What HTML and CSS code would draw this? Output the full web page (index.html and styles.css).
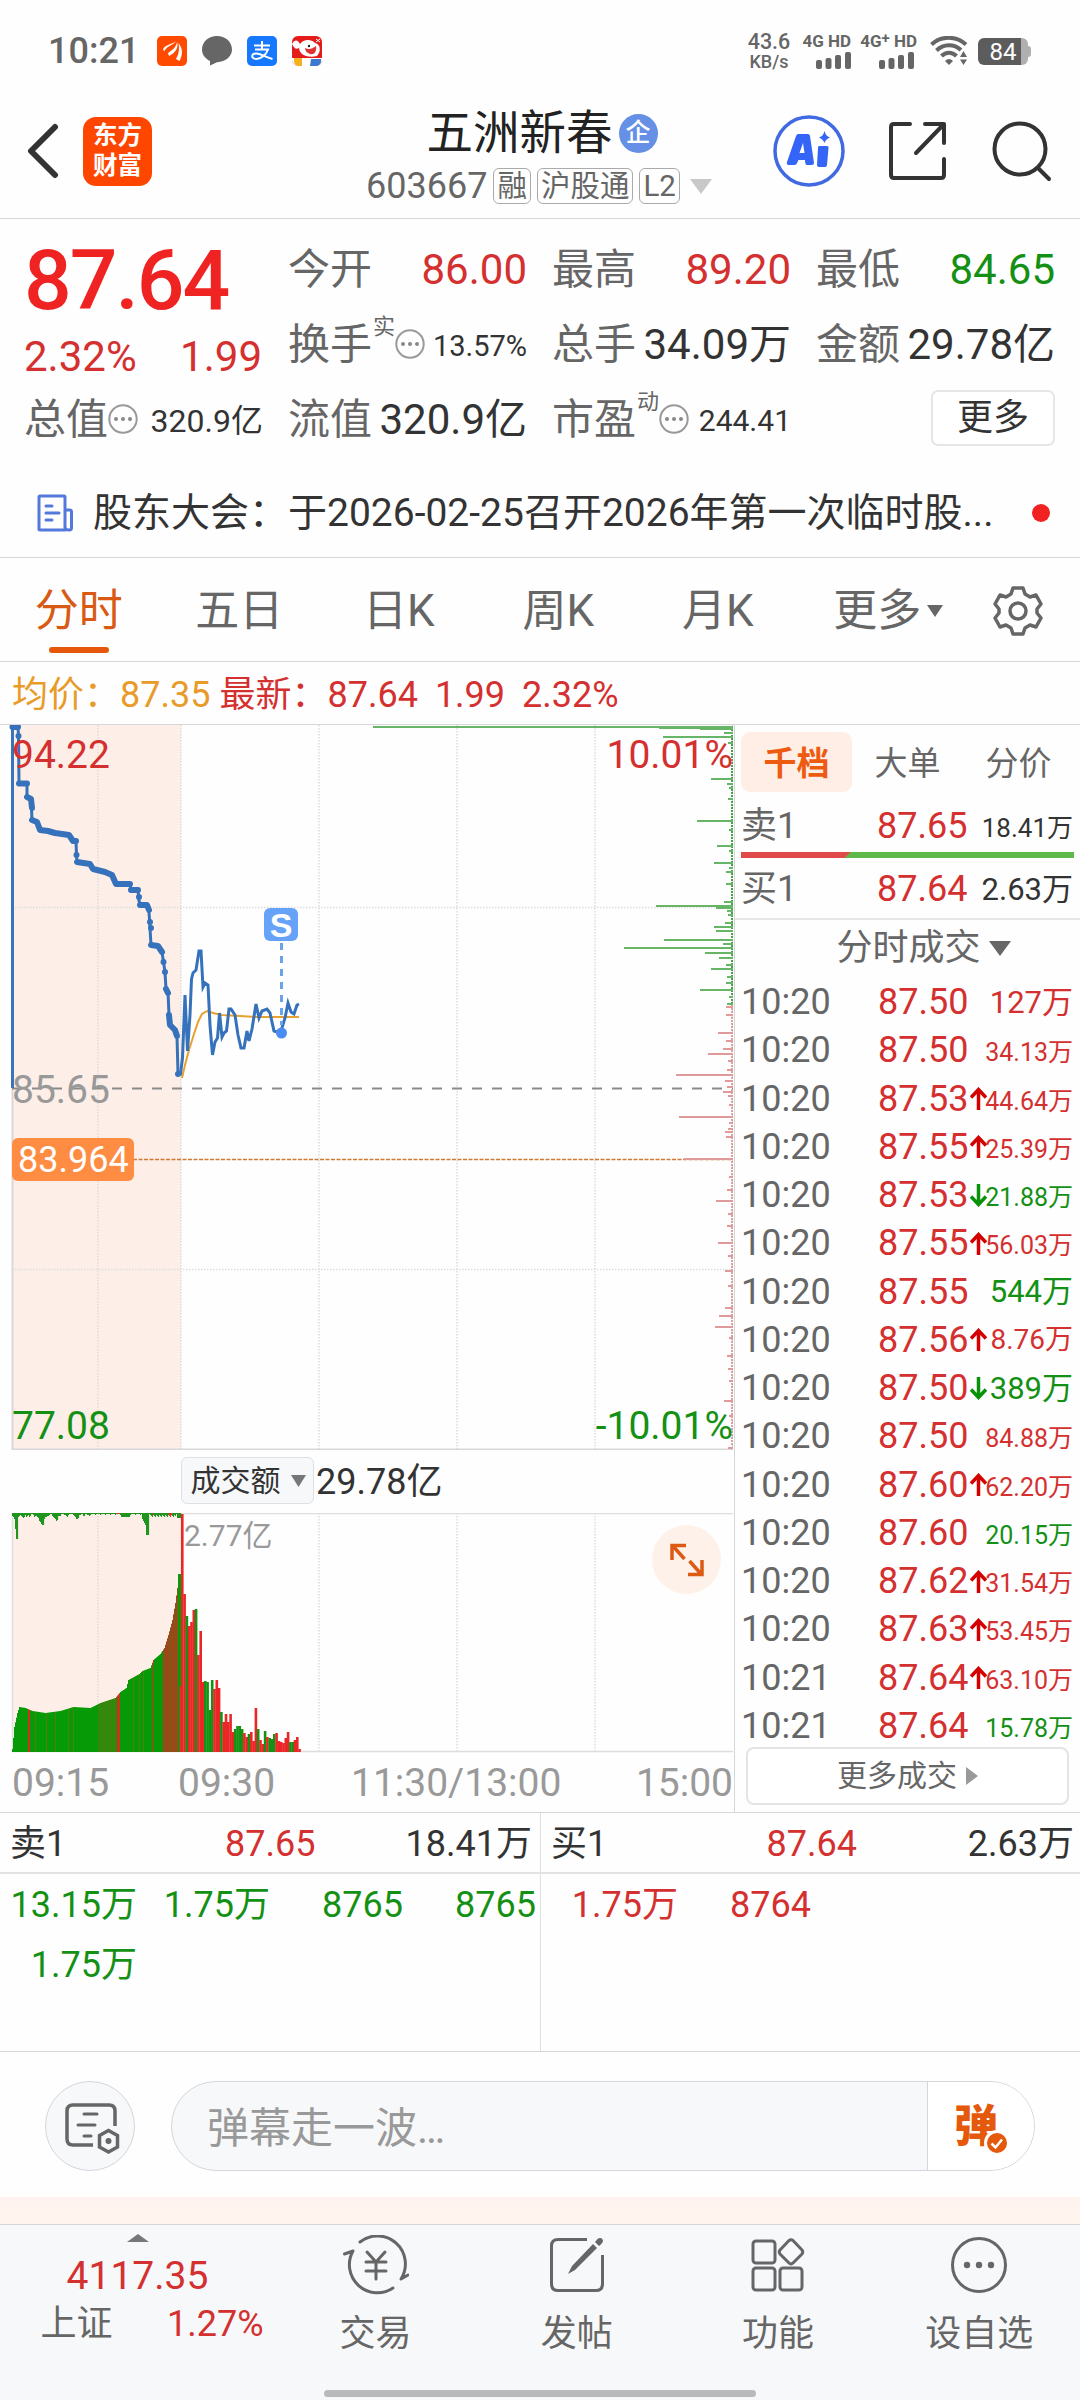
FILE: index.html
```html
<!DOCTYPE html>
<html lang="zh-CN">
<head>
    <meta charset="UTF-8">
    <meta name="viewport" content="width=device-width, initial-scale=1.0">
    <title>五洲新春 603667</title>
    <link rel="stylesheet" href="styles.css">
</head>
<body>

    <div class="status-bar">
        <span class="clock">10:21</span>
        <div class="notif-icons">
            <svg width="30" height="30" viewBox="0 0 30 30">
                <rect width="30" height="30" rx="5" fill="#ff4a00"/>
                <path d="M6 13C9 8.500 14 8.500 19 5.500C16 9 10 10 7 15.500ZM11 17C15 14 19 12 20 6C22 12 18 17 12 20ZM19 23C22 18 22.500 13 21.500 7C26 13 26 18 22.500 25Z" fill="#fff"/>
            </svg>
            <svg width="30" height="30" viewBox="0 0 30 30">
                <path d="M15 0C23.300 0 30 5.800 30 13.500C30 20 24 26 15 26.200L8 29.500V25C3 22.500 0 18.500 0 13.500C0 5.800 6.700 0 15 0Z" fill="#666"/>
            </svg>
            <svg width="30" height="30" viewBox="0 0 30 30">
                <rect width="30" height="30" rx="5" fill="#1677ff"/>
                <path d="M7 9.500H23M15 5V13.500M8 13.500H21C19 19 14 23 9.500 23C3.500 23 4 17 9.500 17.500C15 18 19 21.500 25.500 23" fill="none" stroke="#fff" stroke-width="2"/>
            </svg>
            <svg width="30" height="30" viewBox="0 0 30 30">
                <rect width="30" height="30" rx="6" fill="#e41b1b"/>
                <path d="M0 22H30V24A6 6 0 0 1 24 30H6A6 6 0 0 1 0 24Z" fill="#fff"/>
                <path d="M0 8C3 3 6 4 8 8C11 4 18 2 23 7C29 8 29 16 25 20C17 22 8 20 7 12C4 14 2 12 0 8Z" fill="#fff"/>
                <path d="M13 12C17 14 20 13 24 10C25 16 22 19 18 18C15 17 13 15 13 12Z" fill="#d33"/>
                <path d="M2 22H10V30H6A5 5 0 0 1 2 26Z" fill="#f5b021"/>
                <path d="M19 23H29V25A5 5 0 0 1 25 30H18Z" fill="#3e78cf"/>
                <circle cx="17" cy="10" r="1.200" fill="#222"/>
                <path d="M24 3L28 6M28 3L24 6" stroke="#fff" stroke-width="1"/>
            </svg>
        </div>
        <div class="status-right">
            <div class="net-speed"><b>43.6</b><i>KB/s</i></div>
            <div class="signal">
                <span>4G HD</span>
                <svg width="35" height="17" viewBox="0 0 35 17" fill="#666"><rect y="8" width="6" height="9" rx="2"/><rect x="9.500" y="6" width="6" height="11" rx="2"/><rect x="19" y="3" width="6" height="14" rx="2"/><rect x="29" width="6" height="17" rx="2"/></svg>
            </div>
            <div class="signal signal-plus">
                <span>4G<sup>+</sup> HD</span>
                <svg width="35" height="17" viewBox="0 0 35 17" fill="#666"><rect y="8" width="6" height="9" rx="2"/><rect x="9.500" y="6" width="6" height="11" rx="2"/><rect x="19" y="3" width="6" height="14" rx="2"/><rect x="29" width="6" height="17" rx="2"/></svg>
            </div>
            <svg class="wifi" width="38" height="30" viewBox="0 0 38 30">
                <g fill="none" stroke="#666" stroke-width="4">
                    <path d="M1.500 8.500C11 -0.500 26 -0.500 36 8.500"/>
                    <path d="M6.500 14.500C13.500 7.500 24 7.500 31 14"/>
                    <path d="M11.500 20C16 15.500 22 15.500 26.500 20"/>
                </g>
                <path d="M15 25Q19 21 23 25L19 29ZM30 21L33.500 15L37 21ZM30 23.500L33.500 29L37 23.500Z" fill="#666"/>
            </svg>
            <div class="battery"><span>84</span></div>
        </div>
    </div>

    <header class="page-header">
        <svg class="back" width="32" height="56" viewBox="0 0 32 56"><path d="M28 4L4 28L28 52" fill="none" stroke="#333" stroke-width="6" stroke-linecap="round" stroke-linejoin="round"/></svg>
        <div class="brand"><span>东方</span><span>财富</span></div>
        <div class="title-block">
            <div class="title-row">
                <h1>五洲新春</h1>
                <span class="corp">企</span>
            </div>
            <div class="code-row">
                <span class="code">603667</span>
                <span class="tag">融</span>
                <span class="tag">沪股通</span>
                <span class="tag">L2</span>
                <svg class="caret" width="22" height="15" viewBox="0 0 22 15"><path d="M0 0H22L11 15Z" fill="#c8c8c8"/></svg>
            </div>
        </div>
        <div class="head-actions">
            <svg width="74" height="74" viewBox="0 0 74 74">
                <circle cx="37" cy="37" r="34" fill="#fff" stroke="#4169e1" stroke-width="3.500"/>
                <path fill="#3565f6" fill-rule="evenodd" d="M26 20H36Q37.500 20 38 22L42 49Q42 51 40 51H35Q33 51 33 46H26.500L24.500 50Q24 51 22 51H16Q14 50 15 48L24 22Q25 20 26 20ZM31 29L27.500 39H32.500ZM47 32H55Q57 32 56.500 34L55 51Q55 53 53 53H47Q45 53 45 51L46 34Q46 32 47 32ZM52.500 17Q53.500 22 58 23.500Q53.500 25 52.500 29Q51 25 47 23.500Q51.500 22 52.500 17Z"/>
            </svg>
            <svg class="share" width="60" height="60" viewBox="0 0 60 60" fill="none" stroke="#333" stroke-width="4" stroke-linecap="round" stroke-linejoin="round">
                <path d="M22 3H6Q3 3 3 6V54Q3 57 6 57H53Q56 57 56 54V38M37 3H56V22M56 3L28 32"/>
            </svg>
            <svg class="search" width="60" height="62" viewBox="0 0 60 62" fill="none" stroke="#333" stroke-width="4" stroke-linecap="round">
                <circle cx="28" cy="29" r="25.500"/><path d="M46 48L57 59"/>
            </svg>
        </div>
    </header>

    <section class="quote">
        <div class="cell price-cell">
            <div class="price">87.64</div>
            <div class="change"><span>2.32%</span><span>1.99</span></div>
        </div>
        <div class="cell"><label>今开</label><b class="up">86.00</b></div>
        <div class="cell"><label>最高</label><b class="up">89.20</b></div>
        <div class="cell"><label>最低</label><b class="down">84.65</b></div>
        <div class="cell"><label>换手<sup>实</sup></label><svg class="dots" width="30" height="30" viewBox="0 0 30 30"><use href="#dots"/></svg><b class="small">13.57%</b></div>
        <div class="cell"><label>总手</label><b>34.09万</b></div>
        <div class="cell"><label>金额</label><b>29.78亿</b></div>
        <div class="cell"><label>总值</label><svg class="dots" width="30" height="30" viewBox="0 0 30 30"><use href="#dots"/></svg><b class="small cap">320.9亿</b></div>
        <div class="cell"><label>流值</label><b>320.9亿</b></div>
        <div class="cell"><label>市盈<sup>动</sup></label><svg class="dots" width="30" height="30" viewBox="0 0 30 30"><g id="dots"><circle cx="15" cy="15" r="13.700" fill="none" stroke="#999" stroke-width="2"/><g fill="#888"><circle cx="8" cy="15" r="2"/><circle cx="15" cy="15" r="2"/><circle cx="22" cy="15" r="2"/></g></g></svg><b class="small pe">244.41</b></div>
        <div class="cell"><button class="more-btn">更多</button></div>
    </section>

    <section class="news">
        <svg width="36" height="38" viewBox="0 0 36 38" fill="none" stroke="#5478dc" stroke-width="3" stroke-linecap="round" stroke-linejoin="round">
            <path d="M28 36H3Q2 36 2 35V3Q2 2 3 2H27Q28 2 28 3V34M28 16H33Q34.500 16 34.500 18V34Q34.500 36 32 36Q28 36 28 33M9 12H15M9 19H22M9 26H15"/>
        </svg>
        <p>股东大会：于2026-02-25召开2026年第一次临时股...</p>
        <i class="red-dot"></i>
    </section>

    <nav class="tabs">
        <a class="active">分时</a>
        <a>五日</a>
        <a>日K</a>
        <a>周K</a>
        <a>月K</a>
        <a class="more">更多<svg width="16" height="12" viewBox="0 0 16 12"><path d="M0 0H16L8 12Z" fill="#666"/></svg></a>
        <a class="gear">
            <svg width="52" height="52" viewBox="0 0 52 52" fill="none" stroke="#666" stroke-width="3.500" stroke-linejoin="round">
                <path d="M21 3H31L33 9L38 12L44 10L49 19L45 24V28L49 33L44 42L38 40L33 43L31 49H21L19 43L14 40L8 42L3 33L7 28V24L3 19L8 10L14 12L19 9Z"/>
                <circle cx="26" cy="26" r="8"/>
            </svg>
        </a>
    </nav>

    <div class="legend">
        <span class="avg">均价：87.35</span>
        <span>最新：87.64</span>
        <span class="chg">1.99</span>
        <span class="pct">2.32%</span>
    </div>

    <main>
        <section class="charts">
            <svg class="price-chart" width="734" height="725" viewBox="0 0 734 725">
                <rect x="12" y="0" width="169" height="725" fill="#fdeee7"/>
                <path d="M98 0V725M181 0V725M319 0V725M457 0V725M595 0V725M12 182.500H733M12 544.500H733" stroke="#ddd" stroke-width="1.500" stroke-dasharray="1.500 1.500"/>
                <path d="M12.500 0V724.500H733" fill="none" stroke="#d8d8d8" stroke-width="2"/>
                <path d="M732.500 0V725" stroke="#ccc" stroke-dasharray="2 3"/>
                <path d="M12 363.500H733" stroke="#8a8a8a" stroke-width="2" stroke-dasharray="10 10"/>
                <path d="M12 434.500H733" stroke="#d07830" stroke-width="1.500" stroke-dasharray="4 1.500"/>
                <g id="depth"></g>
                <path d="M182 353L185 340L189 325L194 309L198 297L202 289L207 286L213 288L222 290L240 291L256 292H299" fill="none" stroke="#e8a030" stroke-width="2"/>
                <path d="M12.500 363V2" stroke="#3a74ba" stroke-width="3"/>
                <path d="M12.500 2H18L18.500 11L19 58.500H27V72L31 74L31.500 83L32 95L37 97L40 105L48 106L55 108L69 110L73 116H76L76.500 130L77 137L90 139L93 144L105 147L112 150L115 155L116 159H130L131 165H138L139 176L141 180H147L149 187L150 203L151 220L158 221L162 227L163.500 237L165 247L166 264L168 267L169 290L170 300L175 305L177 311L178 349" fill="none" stroke="#3572bb" stroke-width="3"/>
                <path d="M12.500 2H18M18.500 11V11M19 58.500H27M27 72L31 74L32 83M32 95L37 97L40 105L48 106L55 108L69 110L73 116H76M76.500 130V130M77 137L90 139L93 144L105 147L112 150L116 159H130M131 165H138M139 172V172M140 180H147L149 185M150 197V197M151 203V203M151 220L158 221L162 227M163.500 237V237M165 247V247M166 264L168 268M169 290L170 300L175 305L177 311M178 349V349" fill="none" stroke="#3572bb" stroke-width="6" stroke-linecap="round" stroke-linejoin="round"/>
                <path d="M178 349H180.500L182.500 333L185 270L187.500 326L190 290L191.500 254L193 248L196 245L199 226H201L203 262L205 258L208 260L210 300L212.500 330L215 317L217.500 313L219.500 288L222 312L224 308L226.500 306L229 284H231L235 290L238 310L241 323H244L247 306L249 316L252 304L256 279L259 293L262 286L267 284L270 288L274 306L277 307L281 306L285 293L288 278L291 287L294 289L297 280L299 279" fill="none" stroke="#3572bb" stroke-width="3"/>
                <path d="M281.500 218V300" stroke="#6aa3ea" stroke-width="3" stroke-dasharray="7 6"/>
                <circle cx="281.500" cy="308" r="5.500" fill="#4a8cf2"/>
                <rect x="264" y="183" width="34" height="33" rx="6" fill="#66a2f8"/>
                <text class="sell-mark" x="281" y="211.500" text-anchor="middle">S</text>
                <rect x="12" y="413" width="122" height="43" rx="6" fill="#fe8d43"/>
                <text class="cost" x="18" y="447">83.964</text>
                <text class="scale up" x="12" y="43">94.22</text>
                <text class="scale up" x="733" y="43" text-anchor="end">10.01%</text>
                <text class="scale mid" x="12" y="378">85.65</text>
                <text class="scale down" x="12" y="714">77.08</text>
                <text class="scale down" x="733" y="714" text-anchor="end">-10.01%</text>
            </svg>

            <div class="vol-head">
                <button class="vol-type">成交额<svg width="15" height="12" viewBox="0 0 15 12"><path d="M0 0H15L7.500 12Z" fill="#777"/></svg></button>
                <span>29.78亿</span>
            </div>

            <div class="vol-wrap">
                <svg class="vol-chart" width="734" height="240" viewBox="0 0 734 240">
                    <rect x="12" y="0" width="169" height="238" fill="#fdeee7"/>
                    <path d="M98 0V238M181 0V238M319 0V238M457 0V238M595 0V238" stroke="#ddd" stroke-width="1.500" stroke-dasharray="1.500 1.500"/>
                    <path d="M12 .500H733M12.500 0V238.500H733" fill="none" stroke="#dedede" stroke-width="1.500"/>
                    <g id="volume"></g>
                    <text class="vol-max" x="184" y="33">2.77亿</text>
                </svg>
                <button class="expand">
                    <svg width="36" height="36" viewBox="0 0 36 36" fill="none" stroke="#dd5a14" stroke-width="3.500"><path d="M3 18V3.500H17M3.500 3.500L15.500 17M33 18V32.500H19M32.500 32.500L20.500 19"/></svg>
                </button>
            </div>

            <div class="time-axis">
                <span>09:15</span><span>09:30</span><span>11:30/13:00</span><span>15:00</span>
            </div>
        </section>

        <aside class="panel">
            <div class="panel-tabs"><a class="active">千档</a><a>大单</a><a>分价</a></div>
            <div class="level sell"><span>卖1</span><b>87.65</b><em class="s26">18.41万</em></div>
            <div class="ratio"></div>
            <div class="level buy"><span>买1</span><b>87.64</b><em>2.63万</em></div>
            <div class="deal-title">分时成交<svg width="22" height="15" viewBox="0 0 22 15"><path d="M0 0H22L11 15Z" fill="#666"/></svg></div>
            <div id="ticks" class="ticks"></div>
            <button class="more-deals">更多成交<svg width="12" height="18" viewBox="0 0 12 18"><path d="M0 0L12 9L0 18Z" fill="#999"/></svg></button>
        </aside>
    </main>

    <section class="orders">
        <div class="book">
            <div class="book-head"><span>卖1</span><b>87.65</b><span>18.41万</span></div>
            <div class="book-list down"><span>13.15万</span><span>1.75万</span><span>8765</span><span>8765</span><span>1.75万</span></div>
        </div>
        <div class="book">
            <div class="book-head"><span>买1</span><b>87.64</b><span>2.63万</span></div>
            <div class="book-list up"><span>1.75万</span><span>8764</span></div>
        </div>
    </section>

    <section class="danmu">
        <button class="danmu-set">
            <svg width="56" height="52" viewBox="0 0 56 52" fill="none" stroke="#666" stroke-width="3.500">
                <path d="M29 43H9Q3 43 3 37V9Q3 3 9 3H45Q51 3 51 9V24"/>
                <path d="M20 12H33M14 23H31M20 34H27" stroke-width="3" stroke-linecap="round"/>
                <path d="M44.500 28.500L53.500 33.500V45L44.500 50L35.500 45V33.500Z"/>
                <circle cx="44.500" cy="39" r="3" fill="#666" stroke="none"/>
            </svg>
        </button>
        <div class="danmu-box">
            <span class="placeholder">弹幕走一波…</span>
            <div class="danmu-toggle">
                <span>弹</span>
                <svg width="26" height="26" viewBox="0 0 26 26"><circle cx="13" cy="13" r="11.500" fill="#e5590c" stroke="#fff" stroke-width="3"/><path d="M7.500 13.500L11.500 17.500L18 9.500" fill="none" stroke="#fff" stroke-width="2.500"/></svg>
            </div>
        </div>
    </section>

    <div class="strip"></div>

    <footer>
        <div class="index">
            <svg width="22" height="8" viewBox="0 0 22 8"><path d="M0 8L11 0L22 8Z" fill="#77787c"/></svg>
            <b>4117.35</b>
            <div><span>上证</span><b>1.27%</b></div>
        </div>
        <a>
            <svg width="66" height="60" viewBox="0 0 66 60" fill="none" stroke="#666" stroke-width="3" stroke-linecap="round" stroke-linejoin="round">
                <path d="M17 7A28 28 0 0 1 58 44L65 40M1.500 19L10 16A28 28 0 0 0 50 53"/>
                <path d="M24 17L33 27L42 17M23 27H43M23 36H43M33 27V44"/>
            </svg>
            <span>交易</span>
        </a>
        <a>
            <svg width="58" height="60" viewBox="0 0 58 60">
                <path d="M39 4.500H10Q3.500 4.500 3.500 11V49Q3.500 55.500 10 55.500H48Q54.500 55.500 54.500 49V20" fill="none" stroke="#666" stroke-width="3"/>
                <path d="M20 39L24 31L45 9L49 13L27 35ZM47 7L50 3.500Q54 2 55 5.500Q55 8 51 11Z" fill="#666"/>
            </svg>
            <span>发帖</span>
        </a>
        <a>
            <svg width="56" height="60" viewBox="0 0 56 60" fill="none" stroke="#666" stroke-width="3" stroke-linejoin="round">
                <rect x="3" y="6" width="22" height="22" rx="3"/><rect x="3" y="33" width="22" height="22" rx="3"/><rect x="30" y="33" width="22" height="22" rx="3"/>
                <path d="M39 5.500Q41 4 43 5.500L52 15Q53.500 17 52 19L43 28Q41 30 39 28L30 19Q28.500 17 30 15Z"/>
            </svg>
            <span>功能</span>
        </a>
        <a>
            <svg width="60" height="60" viewBox="0 0 60 60">
                <circle cx="30" cy="30" r="26.500" fill="none" stroke="#666" stroke-width="3"/>
                <g fill="#666"><circle cx="18" cy="30" r="3.200"/><circle cx="30" cy="30" r="3.200"/><circle cx="42" cy="30" r="3.200"/></g>
            </svg>
            <span>设自选</span>
        </a>
        <div class="home-bar"></div>
    </footer>

    <script>
        // time, price, direction, amount, amount colour
        const ticks = [
            ["10:20", "87.50", "", "127万", "up"],
            ["10:20", "87.50", "", "34.13万", "up"],
            ["10:20", "87.53", "u", "44.64万", "up"],
            ["10:20", "87.55", "u", "25.39万", "up"],
            ["10:20", "87.53", "d", "21.88万", "down"],
            ["10:20", "87.55", "u", "56.03万", "up"],
            ["10:20", "87.55", "", "544万", "down"],
            ["10:20", "87.56", "u", "8.76万", "up"],
            ["10:20", "87.50", "d", "389万", "down"],
            ["10:20", "87.50", "", "84.88万", "up"],
            ["10:20", "87.60", "u", "62.20万", "up"],
            ["10:20", "87.60", "", "20.15万", "down"],
            ["10:20", "87.62", "u", "31.54万", "up"],
            ["10:20", "87.63", "u", "53.45万", "up"],
            ["10:21", "87.64", "u", "63.10万", "up"],
            ["10:21", "87.64", "", "15.78万", "down"]
        ];
        const arrows = {
            u: '<svg width="17" height="23" viewBox="0 0 17 23"><path d="M8.500 23V3M1 10.500L8.500 2.500L16 10.500" fill="none" stroke="#d40000" stroke-width="3.500"/></svg>',
            d: '<svg width="17" height="23" viewBox="0 0 17 23"><path d="M8.500 0V20M1 12.500L8.500 20.500L16 12.500" fill="none" stroke="#089208" stroke-width="3.500"/></svg>',
            "": ""
        };
        document.getElementById("ticks").innerHTML = ticks.map(t => {
            const size = t[3].length > 5 ? "s25" : t[3].length > 4 ? "s28" : "";
            return `<div class="tick"><span>${t[0]}</span><b>${t[1]}</b><i>${arrows[t[2]]}</i><em class="${t[4]} ${size}">${t[3]}</em></div>`;
        }).join("");

        function rect(x, y, w, h, fill) {
            return `<rect x="${x}" y="${y}" width="${w}" height="${h}" fill="${fill}"/>`;
        }

        // order depth: [y, length], drawn from the right edge
        const asks = [[1, 360], [2, 74], [3, 33], [7, 9], [11, 70], [17, 5], [53, 22], [58, 6], [62, 4], [73, 5], [95, 36], [104, 4], [120, 16], [125, 4], [137, 19], [142, 4], [146, 7], [158, 7], [176, 9], [180, 77], [182, 17], [185, 6], [189, 5], [197, 8], [201, 19], [205, 17], [214, 69], [218, 10], [222, 109], [227, 28], [232, 14], [239, 7], [243, 22], [251, 6], [257, 7], [264, 33], [271, 4], [278, 6]];
        const bids = [[281, 7], [289, 7], [307, 15], [315, 7], [323, 10], [328, 25], [335, 5], [344, 6], [349, 57], [355, 8], [361, 6], [366, 10], [370, 5], [379, 4], [391, 54], [397, 4], [403, 5], [406, 8], [411, 7], [433, 49], [451, 4], [464, 6], [475, 17], [488, 5], [500, 6], [517, 15], [530, 5], [545, 8], [560, 5], [582, 8], [590, 14], [601, 18], [612, 4], [630, 6], [643, 5], [655, 4], [675, 9], [690, 4], [722, 5]];
        let depth = "";
        for (let y = 4; y < 720; y += 3) {
            depth += rect(732 - (y * 7 % 3), y, 1 + (y * 7 % 3), 2, y < 280 ? "#45a545" : "#dda0a0");
        }
        asks.forEach(d => depth += rect(733 - d[1], d[0], d[1], 2, "#67b567"));
        bids.forEach(d => depth += rect(733 - d[1], d[0], d[1], 2, "#e09a9a"));
        document.getElementById("depth").innerHTML = depth;

        // call auction outline: [x, top]
        const auction = [[12, 236], [14, 214], [17, 200], [19, 194], [25, 195], [32, 198], [45, 200], [60, 198], [73, 194], [90, 195], [100, 190], [115, 185], [120, 179], [126, 175], [128, 167], [139, 161], [142, 158], [150, 155], [153, 147], [160, 141], [164, 135], [168, 122], [172, 107], [175, 90], [177, 75], [178, 61], [181, 61]];
        let vol = "";
        for (let i = 1; i < auction.length; i++) {
            const [x0, y0] = auction[i - 1];
            const [x1, y1] = auction[i];
            for (let x = x0; x < x1; x++) {
                const top = y0 + (y1 - y0) * (x - x0) / (x1 - x0);
                let fill = "#069b06";
                if ([28, 29, 117, 118, 119, 153].includes(x)) fill = "#d42d20";
                else if ([35, 46, 55, 68, 73, 133, 139, 143].includes(x)) fill = "#4f7f0d";
                else if (x > 97 && x < 116) fill = x % 3 ? "#2a8c0a" : "#46800e";
                else if (x > 162 && x < 178) fill = x % 3 ? "#a2451a" : "#7b5c14";
                vol += rect(x, top, 1.1, 239 - top, fill);
            }
        }
        const unmatched = [3, 4, 6, 16, 26, 26, 4, 3, 2, 3, 4, 5, 4, 2, 4, 3, 2, 4, 3, 1, 1, 2, 4, 3, 3, 4, 5, 8, 9, 11, 12, 12, 6, 4, 4, 3, 3, 2, 1, 1, 3, 4, 5, 6, 8, 7, 3, 3, 3, 1, 1, 1, 2, 2, 3, 4, 2, 1, 1, 1, 1, 2, 3, 4, 6, 6, 5, 2, 2, 1, 1, 3, 3, 1, 1, 2, 2, 3];
        for (let x = 12; x < 181; x++) {
            let h = 1 + (x % 5 === 0 ? 1 : 0);
            if (x - 12 < unmatched.length) h = unmatched[x - 12];
            if (x > 120 && x < 130) h = 4;
            if (x > 141 && x < 146) h = 4 + (x - 141) * 2;
            if (x > 145 && x < 149) h = 22;
            if (x > 149 && x < 176) h = 2 + x % 3;
            if (x > 176) h = 5;
            vol += rect(x, -1, 1.1, h + 1, (x > 116 && x < 120) || (x > 168 && x < 172) || x === 153 ? "#e03030" : "#1f941f");
        }
        // turnover per minute, negative = falling
        const minutes = [238, 158, -136, 126, 130, 142, -143, 97, 121, 70, -71, -70, -42, -72, 63, 72, 64, -40, 30, 38, 30, 38, 20, -23, -26, -26, -23, 19, 15, -18, 20, 11, 44, -23, 12, 8, -21, 15, -14, -13, -18, 19, 11, 10, 9, 14, 20, -10, -10, 12, 15, 3];
        vol += rect(179.500, 173, 2, 66, "#e22c2c");
        minutes.forEach((m, i) => {
            const h = Math.abs(m);
            vol += rect(181 + i * 2.3, 239 - h, 2.6, h, m < 0 ? "#149214" : "#ea2626");
        });
        document.getElementById("volume").innerHTML = vol;
    </script>

</body>
</html>
```
FILE: styles.css
```css
* {
    box-sizing: border-box;
}

body {
    margin: 0;
    width: 1080px;
    height: 2400px;
    overflow: hidden;
    background: #fefefe;
    color: #333;
    font-family: Roboto, "Noto Sans CJK SC", sans-serif;
    font-size: 36px;
    font-weight: 400;
    line-height: 1;
}

b, i, em {
    font-weight: inherit;
    font-style: normal;
}

svg {
    display: block;
    flex: none;
}

button {
    font: inherit;
    color: inherit;
    padding: 0;
    display: flex;
    align-items: center;
    justify-content: center;
}

.up {
    color: #d43030;
    fill: #d43030;
}

.down {
    color: #149014;
    fill: #149014;
}

/* Status bar */
.status-bar {
    height: 84px;
    padding: 18px 52px 0 48px;
    display: flex;
    align-items: center;
    color: #666;
}

.clock {
    width: 109px;
    font-weight: 500;
}

.notif-icons {
    display: flex;
    gap: 15px;
}

.status-right {
    margin-left: auto;
    display: flex;
    align-items: center;
}

.net-speed {
    width: 46px;
    margin-right: 12px;
    display: flex;
    flex-direction: column;
    align-items: center;
    gap: 0;
    font-weight: 500;
}

.net-speed b {
    font-size: 21.500px;
}

.net-speed i {
    font-size: 18px;
}

.signal {
    width: 47px;
    margin-right: 10px;
    display: flex;
    flex-direction: column;
    align-items: flex-end;
    gap: 2px;
    font-size: 17px;
    font-weight: 700;
    white-space: nowrap;
}

.signal sup {
    font-size: 15px;
    line-height: 0;
    vertical-align: 4px;
}

.signal-plus {
    width: 56px;
    margin-right: 13px;
}

.signal-plus svg {
    margin-right: 3px;
}

.wifi {
    margin-right: 10px;
}

.battery {
    width: 50px;
    height: 27px;
    border-radius: 6px;
    background: linear-gradient(90deg, #5c5c5c 43px, #b0b0b0 43px);
    color: #fff;
    font-size: 24px;
    text-align: center;
    line-height: 28px;
    position: relative;
}

.battery::after {
    content: "";
    position: absolute;
    right: -3px;
    top: 8px;
    width: 3px;
    height: 11px;
    background: #b0b0b0;
    border-radius: 0 3px 3px 0;
}

/* Header */
.page-header {
    height: 135px;
    padding: 0 28px 0 27px;
    display: grid;
    grid-template-columns: 56px 69px 1fr 280px;
    align-items: center;
    border-bottom: 1px solid #d6d6d6;
}

.brand {
    width: 69px;
    height: 69px;
    border-radius: 13px;
    background: #ff4600;
    color: #fff;
    font-size: 24.500px;
    font-weight: 700;
    display: flex;
    flex-direction: column;
    align-items: center;
    justify-content: center;
    gap: 6px;
}

.title-block {
    width: 620px;
    margin-left: 77px;
    padding-top: 12px;
    align-self: center;
    justify-self: start;
    display: flex;
    flex-direction: column;
    align-items: center;
    gap: 12px;
    margin-right: -300px;
}

.title-row, .code-row {
    display: flex;
    align-items: center;
}

.title-row {
    gap: 6px;
    padding-left: 6px;
}

h1 {
    margin: 0;
    font-size: 46.500px;
    font-weight: 400;
    color: #222;
}

.corp {
    width: 39px;
    height: 39px;
    border-radius: 50%;
    background: #6590e6;
    color: #fff;
    font-size: 25px;
    font-weight: 500;
    line-height: 38px;
    text-align: center;
}

.code-row {
    gap: 6px;
    color: #666;
}

.tag {
    height: 36px;
    padding: 0 3px;
    border: 1.500px solid #aaa;
    border-radius: 6px;
    font-size: 29.500px;
    line-height: 34px;
}

.caret {
    margin-left: 4px;
}

.head-actions {
    display: flex;
    align-items: center;
    justify-content: flex-end;
}

.share {
    margin: 0 44px 0 42px;
}

/* Quote */
.quote {
    height: 249px;
    padding: 13px 24px 0;
    display: grid;
    grid-template-columns: repeat(4, 238px);
    grid-auto-rows: 75px;
    column-gap: 26px;
}

.cell {
    display: flex;
    align-items: center;
    font-size: 42px;
    white-space: nowrap;
}

.cell label {
    color: #666;
}

.cell sup {
    font-size: 22px;
    line-height: 0;
    vertical-align: 25px;
    margin-left: 1px;
}

.cell b {
    margin-left: auto;
    margin-right: -1px;
}

.cell .small {
    font-size: 29px;
    padding-top: 3px;
}

.cell .cap {
    font-size: 32px;
}

.cell .pe {
    font-size: 30px;
}

.dots {
    margin-top: -1px;
}

.price-cell {
    grid-row: span 2;
    flex-direction: column;
    align-items: stretch;
    padding-top: 7px;
}

.price {
    color: #f02323;
    font-size: 84px;
    font-weight: 500;
    letter-spacing: -2px;
    height: 85px;
}

.change {
    display: flex;
    justify-content: space-between;
    padding-top: 12px;
    color: #d43030;
}

.more-btn {
    width: 124px;
    height: 56px;
    margin: -3px -1px 0 auto;
    background: #fff;
    border: 2px solid #e6e6e6;
    border-radius: 7px;
    font-size: 36px;
}

/* News */
.news {
    height: 90px;
    padding: 0 30px 0 37px;
    display: flex;
    align-items: center;
    font-size: 39px;
    border-bottom: 1px solid #d6d6d6;
}

.news p {
    margin: 0 0 0 20px;
    padding-top: 1px;
    white-space: nowrap;
}

.red-dot {
    width: 18px;
    height: 18px;
    margin-left: auto;
    border-radius: 50%;
    background: #f02222;
}

/* Tabs */
.tabs {
    height: 104px;
    padding-right: 2px;
    display: grid;
    grid-template-columns: repeat(6, 159.500px) 1fr;
    border-bottom: 1px solid #d6d6d6;
    font-size: 44px;
    color: #666;
}

.tabs a {
    display: flex;
    align-items: center;
    justify-content: center;
    padding-top: 3px;
    gap: 6px;
    position: relative;
}

.tabs .more {
    padding-left: 22px;
}

.tabs .active {
    color: #d85a14;
    padding-right: 2px;
}

.tabs .active::after {
    content: "";
    position: absolute;
    left: 49px;
    bottom: 8px;
    width: 60px;
    height: 6px;
    border-radius: 3px;
    background: #e5570a;
}

.legend {
    height: 63px;
    padding: 3px 0 0 12px;
    display: flex;
    align-items: center;
    border-bottom: 1px solid #d6d6d6;
    color: #d43030;
}

.avg {
    color: #e89b28;
    margin-right: 9px;
}

.chg {
    margin: 0 17px;
}

/* Charts */
main {
    height: 1088px;
    display: grid;
    grid-template-columns: 735px 345px;
    border-bottom: 1px solid #d6d6d6;
}

.charts {
    border-right: 1px solid #d6d6d6;
}

.scale {
    font-size: 39px;
}

.mid {
    fill: #999;
}

.cost {
    font-size: 36px;
    fill: #fff;
}

.sell-mark {
    font-size: 34px;
    font-weight: 700;
    font-family: "Liberation Sans", sans-serif;
    fill: #fff;
}

.vol-head {
    height: 63px;
    padding: 0 0 0 181px;
    display: flex;
    align-items: center;
    gap: 2px;
}

.vol-type {
    width: 133px;
    height: 47px;
    margin-top: -2px;
    padding-left: 1px;
    gap: 10px;
    background: #f7f8fa;
    border: 1px solid #dde0e4;
    border-radius: 6px;
    font-size: 30px;
}

.vol-wrap {
    height: 240px;
    position: relative;
}

.vol-max {
    font-size: 30px;
    fill: #999;
}

.expand {
    position: absolute;
    right: 13px;
    top: 12px;
    width: 69px;
    height: 69px;
    border: none;
    border-radius: 50%;
    background: #fef1ea;
}

.time-axis {
    height: 59px;
    padding: 2px 1px 0 12px;
    display: grid;
    grid-template-columns: 166px 173px 1fr auto;
    align-items: center;
    color: #999;
    font-size: 39px;
}

/* Right panel */
.panel {
    display: flex;
    flex-direction: column;
}

.panel-tabs {
    margin: 7px 6px 0;
    height: 60px;
    display: grid;
    grid-template-columns: repeat(3, 111px);
    font-size: 33px;
    color: #666;
}

.panel-tabs a {
    display: flex;
    align-items: center;
    justify-content: center;
    padding-top: 3px;
}

.panel-tabs .active {
    background: #ffeee5;
    border-radius: 9px;
    color: #ed5b11;
    font-weight: 700;
}

.level {
    height: 60px;
    padding: 7px 7px 0 6px;
    display: grid;
    grid-template-columns: 1fr 90px 106px;
    align-items: center;
}

.buy {
    padding-top: 2px;
}

.level span {
    color: #666;
}

.level b, .tick b {
    color: #d43030;
    text-align: right;
}

.level em, .tick em {
    font-size: 31px;
    text-align: right;
    white-space: nowrap;
}

.level .s26 {
    font-size: 26px;
    padding-top: 4px;
}

.ratio {
    margin: 0 6px;
    height: 6px;
    background: linear-gradient(135deg, #e04a4a 77px, #5eb84a 78px);
}

.deal-title {
    height: 58px;
    padding-left: 20px;
    display: flex;
    align-items: center;
    justify-content: center;
    gap: 8px;
    border-top: 2px solid #e6e6e6;
    color: #666;
    padding-left: 32px;
}

.ticks {
    height: 773px;
    padding-top: 2px;
    display: grid;
    grid-template-rows: repeat(16, 48.250px);
}

.tick {
    padding: 0 7px 0 6px;
    display: grid;
    grid-template-columns: 1fr 90px 19px 86px;
    align-items: center;
}

.tick span {
    color: #666;
}

.tick i {
    padding-left: 2px;
}

.tick em {
    justify-self: end;
}

.tick .s28 {
    font-size: 28px;
}

.tick .s25 {
    font-size: 25px;
    padding-top: 5px;
}

.more-deals {
    width: 323px;
    height: 58px;
    margin: -2px 0 0 11px;
    gap: 9px;
    background: #fff;
    border: 2px solid #e4e4e4;
    border-radius: 8px;
    font-size: 30px;
    color: #666;
}

/* Order queues */
.orders {
    height: 239px;
    display: grid;
    grid-template-columns: 541px 539px;
    border-bottom: 1px solid #d6d6d6;
}

.book:first-child {
    border-right: 1px solid #e0e0e0;
}

.book-head {
    height: 61px;
    padding: 3px 8px 0 10px;
    display: grid;
    grid-template-columns: 1fr 90px 1fr;
    align-items: center;
    border-bottom: 2px solid #e2e2e2;
}

.book-head b {
    color: #d43030;
    margin-left: -1px;
}

.book-head span:last-child {
    text-align: right;
}

.book:last-child .book-head {
    padding-right: 6px;
}

.book-list {
    padding-top: 1px;
    display: grid;
    grid-template-columns: 137px repeat(3, 133px);
    grid-auto-rows: 60px;
    align-items: center;
    text-align: right;
}

/* Comment bar */
.danmu {
    height: 145px;
    padding: 29px 45px 0;
    display: flex;
    gap: 36px;
}

.danmu-set {
    width: 90px;
    height: 90px;
    padding: 3px 0 0 4px;
    border-radius: 50%;
    border: 1.500px solid #d4d6da;
    background: #f7f8fa;
}

.danmu-box {
    flex: 1;
    height: 90px;
    display: flex;
    align-items: center;
    border: 1.500px solid #d4d6da;
    border-radius: 45px;
    background: #f7f8fa;
    overflow: hidden;
    font-size: 42px;
    color: #999;
}

.placeholder {
    flex: 1;
    padding: 6px 0 0 35px;
}

.danmu-toggle {
    width: 107px;
    height: 90px;
    padding: 1px 0 0 26px;
    display: flex;
    align-items: center;
    background: #fff;
    border-left: 1.500px solid #d4d6da;
    color: #e5590c;
    font-size: 44px;
    font-weight: 900;
}

.danmu-toggle svg {
    margin: 32px 0 0 -14px;
}

.strip {
    height: 27px;
    background: linear-gradient(#fff2ef, #fff5ee);
}

/* Bottom nav */
footer {
    height: 176px;
    display: grid;
    grid-template-columns: 275px repeat(4, 1fr);
    background: #f7f8fa;
    border-top: 1px solid #d4d6da;
    color: #666;
    position: relative;
}

footer a {
    padding-top: 10px;
    display: flex;
    flex-direction: column;
    align-items: center;
    gap: 21px;
}

.index {
    padding-top: 9px;
    display: flex;
    flex-direction: column;
    align-items: center;
}

.index b {
    color: #d43030;
}

.index > b {
    margin: 15px 0 10px;
    font-size: 39px;
}

.index div {
    width: 223px;
    margin-left: 29px;
    display: flex;
    justify-content: space-between;
}

.home-bar {
    position: absolute;
    left: 324px;
    bottom: 3px;
    width: 432px;
    height: 7px;
    border-radius: 4px;
    background: #b9babc;
}
```
